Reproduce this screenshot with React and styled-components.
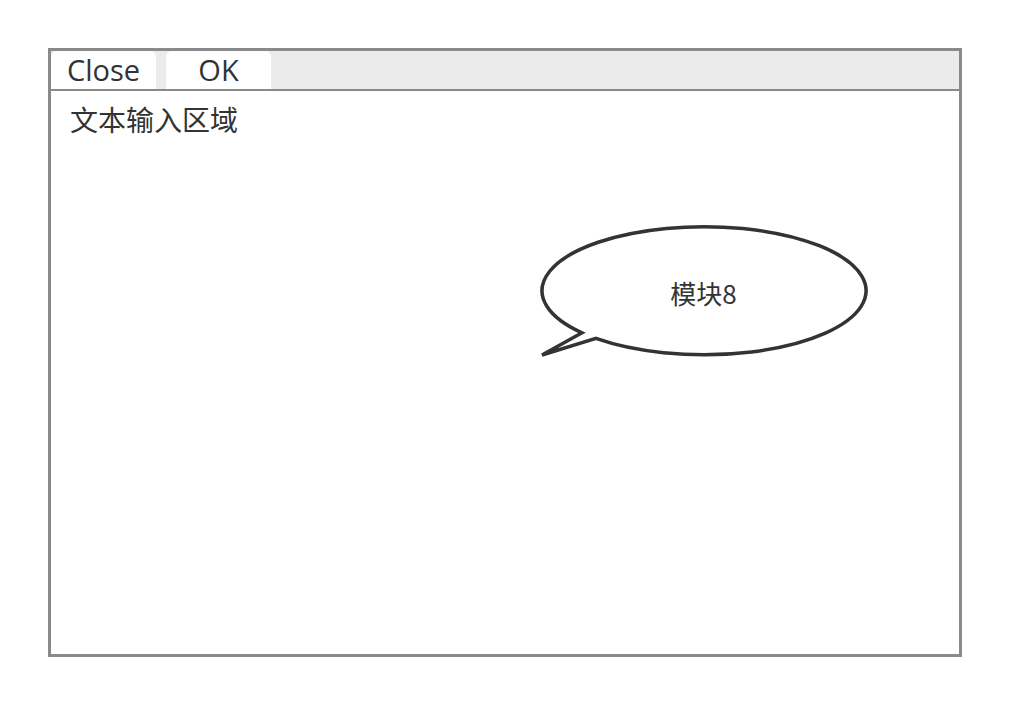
import React from "react";
import styled, { createGlobalStyle } from "styled-components";

const GlobalStyle = createGlobalStyle`
  html, body {
    margin: 0;
    padding: 0;
    background: #ffffff;
  }
  body {
    font-family: "Open Sans", "Noto Sans CJK SC", sans-serif;
    color: #333333;
  }
`;

const Page = styled.div`
  padding: 48px;
`;

const Frame = styled.div`
  width: 908px;
  height: 603px;
  border: 3px solid #8a8a8a;
  display: flex;
  flex-direction: column;
  background: #ffffff;
`;

const TabBar = styled.div`
  height: 38px;
  background: #ebebeb;
  border-bottom: 2px solid #8a8a8a;
  display: flex;
  align-items: stretch;
  gap: 10px;
`;

const Tab = styled.button`
  width: 105px;
  border: none;
  border-radius: 6px 6px 0 0;
  background: #ffffff;
  padding: 0;
  font-family: "Open Sans", "Noto Sans CJK SC", sans-serif;
  font-size: 29px;
  line-height: 38px;
  color: #333333;
  text-align: center;
  cursor: pointer;
`;

const Body = styled.div`
  flex: 1;
  position: relative;
  padding: 8px 19px;
`;

const InputLabel = styled.div`
  font-family: "Noto Sans CJK SC", sans-serif;
  font-size: 28px;
  line-height: 40px;
  color: #333333;
`;

const Bubble = styled.div`
  position: absolute;
  left: 484px;
  top: 129px;
  width: 337px;
  height: 142px;
`;

const BubbleLabel = styled.div`
  position: absolute;
  left: 0;
  top: 0;
  width: 337px;
  height: 144px;
  display: flex;
  align-items: center;
  justify-content: center;
  font-family: "Noto Sans CJK SC", sans-serif;
  font-size: 26px;
  color: #333333;
`;

// ellipse centre (168.5, 70.5), radii 162 x 64; tail joins at two points on it
const BubbleShape = () => (
  <svg width="337" height="142" viewBox="0 0 337 142">
    <path
      d="M47 112.8 L7 135 L61 118.4 A162 64 0 1 0 47 112.8 Z"
      fill="#ffffff"
      stroke="#333333"
      strokeWidth="3.5"
      strokeLinejoin="miter"
    />
  </svg>
);

export default function App() {
  return (
    <Page>
      <GlobalStyle />
      <Frame>
        <TabBar>
          <Tab>Close</Tab>
          <Tab>OK</Tab>
        </TabBar>
        <Body>
          <InputLabel>文本输入区域</InputLabel>
          <Bubble>
            <BubbleShape />
            <BubbleLabel>模块8</BubbleLabel>
          </Bubble>
        </Body>
      </Frame>
    </Page>
  );
}
